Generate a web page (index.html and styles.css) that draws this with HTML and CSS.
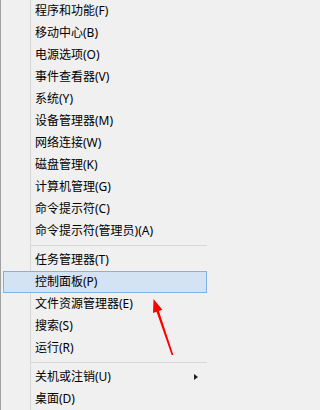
FILE: index.html
```html
<!DOCTYPE html>
<html lang="zh-CN">
<head>
<meta charset="utf-8">
<title>菜单</title>
<link rel="stylesheet" href="styles.css">
</head>
<body>
<div class="menu">
  <div class="item">程序和功能(F)</div>
  <div class="item">移动中心(B)</div>
  <div class="item">电源选项(O)</div>
  <div class="item">事件查看器(V)</div>
  <div class="item">系统(Y)</div>
  <div class="item">设备管理器(M)</div>
  <div class="item">网络连接(W)</div>
  <div class="item">磁盘管理(K)</div>
  <div class="item">计算机管理(G)</div>
  <div class="item">命令提示符(C)</div>
  <div class="item">命令提示符(管理员)(A)</div>
  <div class="sep"></div>
  <div class="item">任务管理器(T)</div>
  <div class="item active">控制面板(P)</div>
  <div class="item">文件资源管理器(E)</div>
  <div class="item">搜索(S)</div>
  <div class="item">运行(R)</div>
  <div class="sep"></div>
  <div class="item has-sub"><span>关机或注销(U)</span><span class="sub-arrow"></span></div>
  <div class="item">桌面(D)</div>
</div>
<svg class="annot-arrow" width="30" height="64" viewBox="0 0 30 64">
  <polygon points="5.5,3 14.4,13.7 10.9,14.9 25.3,58.7 23.7,59.3 8.5,15.7 5,17" fill="#ff0000"/>
</svg>
</body>
</html>
```
FILE: styles.css
```css
html, body {
  margin: 0;
  padding: 0;
  background: #f0f0f0;
}
body {
  width: 208px;
  height: 410px;
  overflow: hidden;
  position: relative;
  font-family: "Noto Sans", "Noto Sans CJK SC", sans-serif;
  font-size: 12px;
  color: #000;
}
.menu {
  box-sizing: border-box;
  height: 410px;
  border-left: 1px solid #a0a0a0;
  background-color: #f0f0f0;
  background-image: linear-gradient(to right, transparent 29px, #d7d7d7 29px, #d7d7d7 30px, transparent 30px);
}
.item {
  box-sizing: border-box;
  height: 22px;
  line-height: 20px;
  margin: 0 1px 0 2px;
  padding-left: 31px;
  padding-right: 8px;
  border: 1px solid transparent;
  white-space: nowrap;
  display: flex;
  align-items: center;
  justify-content: space-between;
}
.item.active {
  background: #d3e3f3;
  border-color: #7fb2e6;
}
.sep {
  height: 1px;
  margin: 3px 1px 3px 30px;
  background: #d7d7d7;
}
.sub-arrow {
  width: 0;
  height: 0;
  border-top: 3.5px solid transparent;
  border-bottom: 3.5px solid transparent;
  border-left: 4px solid #202020;
}
.annot-arrow {
  position: absolute;
  left: 148px;
  top: 296px;
}
```
